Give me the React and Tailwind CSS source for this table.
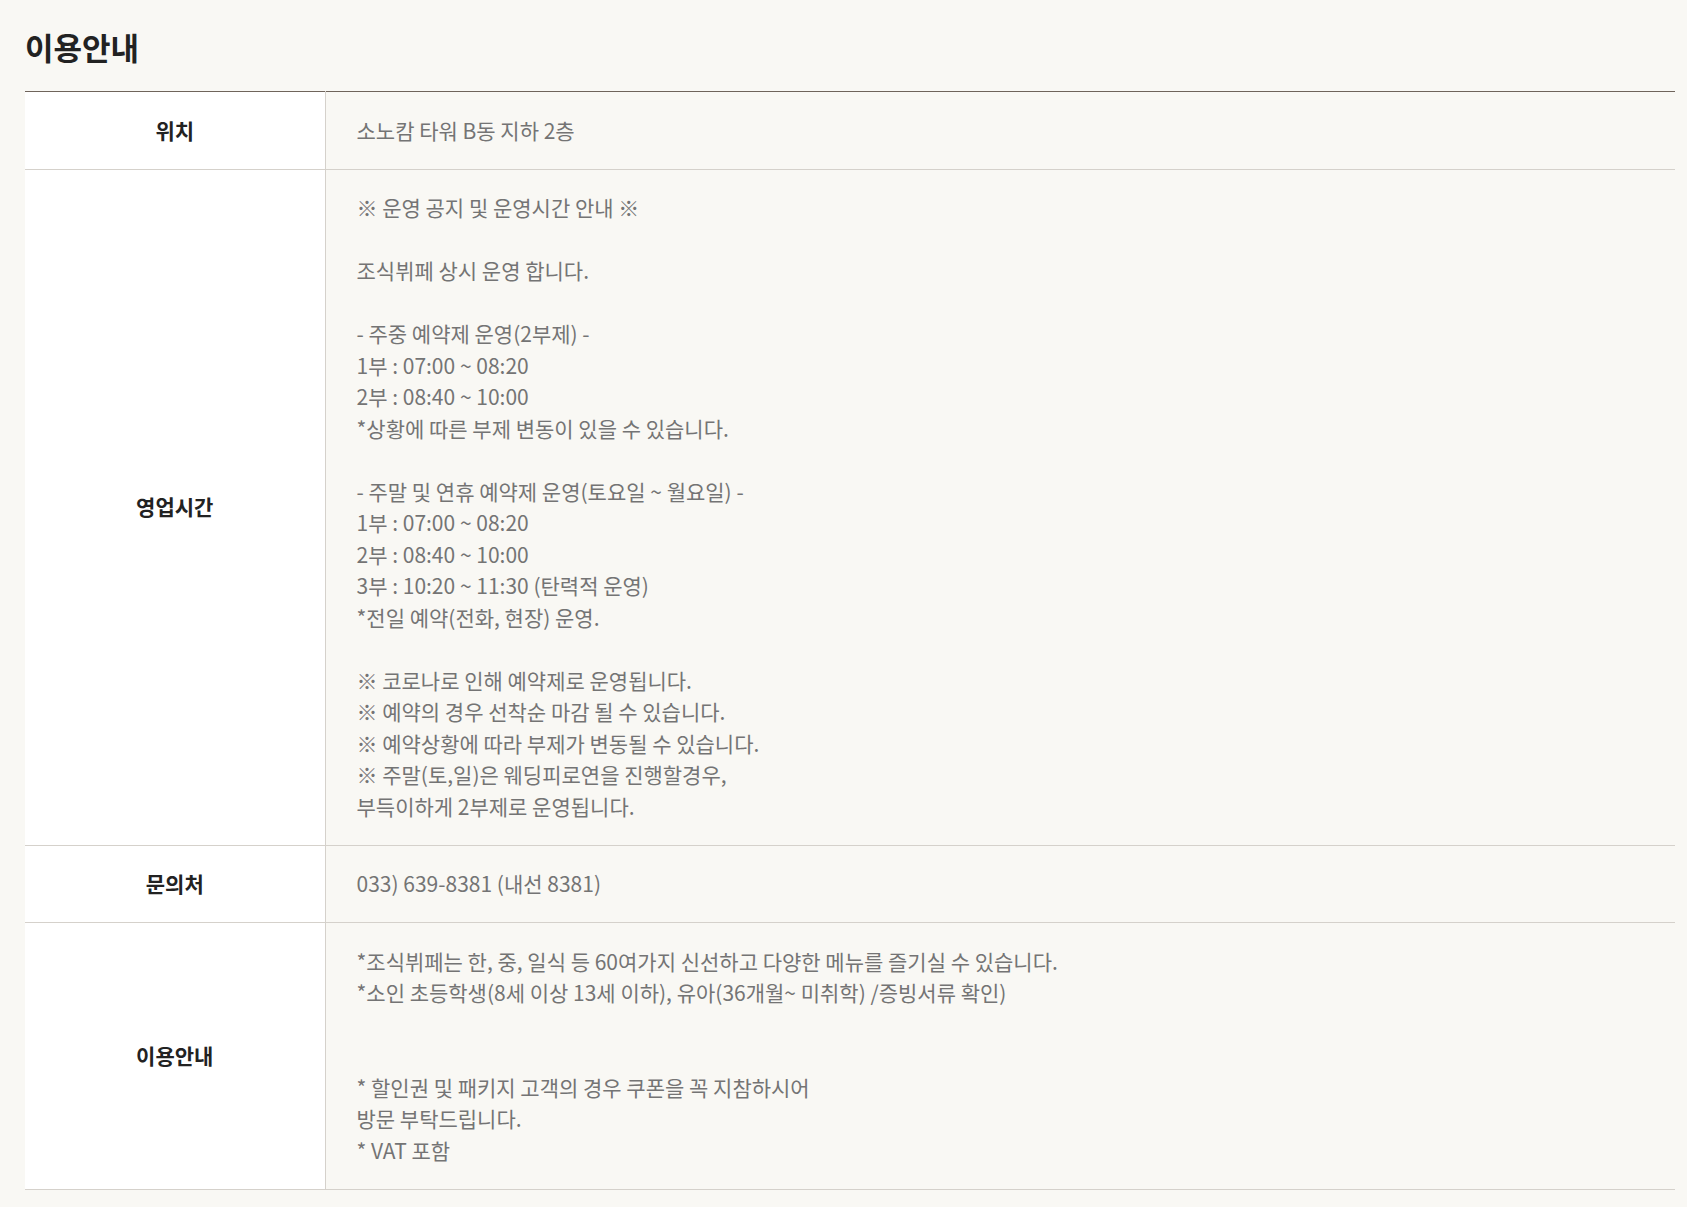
import React from 'react';

const hours = [
    '※ 운영 공지 및 운영시간 안내 ※',
    '',
    '조식뷔페 상시 운영 합니다.',
    '',
    '- 주중 예약제 운영(2부제) -',
    '1부 : 07:00 ~ 08:20',
    '2부 : 08:40 ~ 10:00',
    '*상황에 따른 부제 변동이 있을 수 있습니다.',
    '',
    '- 주말 및 연휴 예약제 운영(토요일 ~ 월요일) -',
    '1부 : 07:00 ~ 08:20',
    '2부 : 08:40 ~ 10:00',
    '3부 : 10:20 ~ 11:30 (탄력적 운영)',
    '*전일 예약(전화, 현장) 운영.',
    '',
    '※ 코로나로 인해 예약제로 운영됩니다.',
    '※ 예약의 경우 선착순 마감 될 수 있습니다.',
    '※ 예약상황에 따라 부제가 변동될 수 있습니다.',
    '※ 주말(토,일)은 웨딩피로연을 진행할경우,',
    '부득이하게 2부제로 운영됩니다.',
];

const guide = [
    '*조식뷔페는 한, 중, 일식 등 60여가지 신선하고 다양한 메뉴를 즐기실 수 있습니다.',
    '*소인 초등학생(8세 이상 13세 이하), 유아(36개월~ 미취학) /증빙서류 확인)',
    '',
    '',
    '* 할인권 및 패키지 고객의 경우 쿠폰을 꼭 지참하시어',
    '방문 부탁드립니다.',
    '* VAT 포함',
];

const Lines = ({ lines }) => (
    <>
        {lines.map((line, i) => (
            <p key={i} className="h-[31.5px]">{line}</p>
        ))}
    </>
);

const rows = [
    { label: '위치', content: <p>소노캄 타워 B동 지하 2층</p> },
    { label: '영업시간', content: <Lines lines={hours} /> },
    { label: '문의처', content: <p>033) 639-8381 (내선 8381)</p> },
    { label: '이용안내', content: <Lines lines={guide} /> },
];

const App = () => {
    return (
        <div
            className="min-h-screen bg-[#f9f8f4] pt-[27px] pb-[18px] pl-[25px] pr-[12px]"
            style={{ fontFamily: '"Noto Sans CJK KR", "Noto Sans", sans-serif' }}
        >
            <h2 className="text-[31px] leading-[40px] font-bold text-[#222] mb-[24px]">이용안내</h2>

            <table className="w-full border-collapse border-t border-t-[#6f645b]">
                <tbody>
                    {rows.map((row) => (
                        <tr key={row.label} className="border-b border-b-[#d5d1cb]">
                            <th className="w-[300px] bg-white text-center align-middle text-[21px] font-bold text-[#222]">
                                {row.label}
                            </th>
                            <td className="border-l border-l-[#d5d1cb] py-[22.5px] pl-[31px] pr-4 text-left text-[21px] leading-[31.5px] text-[#747474]">
                                {row.content}
                            </td>
                        </tr>
                    ))}
                </tbody>
            </table>
        </div>
    );
};

export default App;
